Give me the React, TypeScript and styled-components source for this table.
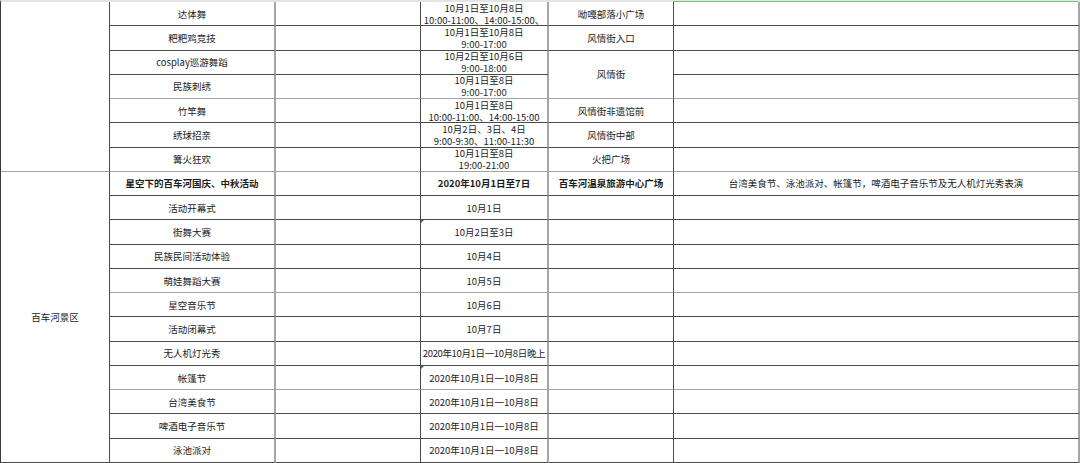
import React from "react";
import styled, { createGlobalStyle, css } from "styled-components";

const GlobalStyle = createGlobalStyle`
  html, body {
    margin: 0;
    padding: 0;
    background: #ffffff;
  }
  body {
    font-family: "Noto Sans CJK SC", "Noto Sans", "Liberation Sans", sans-serif;
    color: #1c1c1c;
  }
`;

const Sheet = styled.div`
  display: grid;
  grid-template-columns: 109px 166px 145px 128px 125px 406px;
  grid-template-rows: repeat(19, 1fr);
  width: 1080px;
  height: 463px;
  box-sizing: border-box;
  border-top: 2px solid #e4e4e4;
  border-left: 1px solid #3c3c3c;
  background: #ffffff;
`;

type CellProps = {
  $row: number;
  $col: number;
  $span: number;
  $softBottom: boolean;
  $softRight: boolean;
  $bold?: boolean;
  $mark?: boolean;
  $selected?: boolean;
  $tight?: boolean;
};

const Cell = styled.div<CellProps>`
  position: relative;
  grid-row: ${(p) => `${p.$row} / span ${p.$span}`};
  grid-column: ${(p) => p.$col};
  box-sizing: border-box;
  display: flex;
  flex-direction: column;
  align-items: center;
  justify-content: center;
  border-bottom: 1px solid ${(p) => (p.$softBottom ? "#a3a3a3" : "#4a4a4a")};
  border-right: ${(p) => (p.$softRight ? "2px solid #a6a6a6" : "1px solid #4a4a4a")};
  font-size: 9.5px;
  line-height: 12px;
  font-weight: ${(p) => (p.$bold ? 700 : 400)};
  letter-spacing: ${(p) => (p.$tight ? "-0.35px" : "0")};
  white-space: nowrap;
  text-align: center;
  min-width: 0;
  overflow: hidden;

  ${(p) =>
    p.$mark &&
    css`
      &::after {
        content: "";
        position: absolute;
        top: 0;
        left: 0;
        border-top: 3px solid #1f8f1f;
        border-right: 3px solid transparent;
      }
    `}

  ${(p) =>
    p.$selected &&
    css`
      overflow: visible;
      &::before {
        content: "";
        position: absolute;
        top: -1px;
        left: -1px;
        right: 0;
        height: 1px;
        background: #72c472;
      }
    `}
`;

const Line = styled.span`
  display: block;
  height: 12px;
`;

type CellData = {
  text?: string | string[];
  span?: number;
  bold?: boolean;
  mark?: boolean;
  selected?: boolean;
  tight?: boolean;
};

// null = covered by a merged cell above
type Row = (CellData | null)[];

const e: CellData = {};

const rows: Row[] = [
  [{ span: 7 }, { text: "达体舞" }, e, { text: ["10月1日至10月8日", "10:00-11:00、14:00-15:00、"] }, { text: "呦嘎部落小广场" }, { selected: true }],
  [null, { text: "粑粑鸡竞技" }, e, { text: ["10月1日至10月8日", "9:00-17:00"] }, { text: "风情街入口" }, e],
  [null, { text: "cosplay巡游舞蹈" }, e, { text: ["10月2日至10月6日", "9:00-18:00"] }, { text: "风情街", span: 2 }, e],
  [null, { text: "民族刺绣" }, e, { text: ["10月1日至8日", "9:00-17:00"] }, null, e],
  [null, { text: "竹竿舞" }, e, { text: ["10月1日至8日", "10:00-11:00、14:00-15:00"] }, { text: "风情街非遗馆前" }, e],
  [null, { text: "绣球招亲" }, e, { text: ["10月2日、3日、4日", "9:00-9:30、11:00-11:30"] }, { text: "风情街中部" }, e],
  [null, { text: "篝火狂欢" }, e, { text: ["10月1日至8日", "19:00-21:00"] }, { text: "火把广场" }, e],
  [
    { text: "百车河景区", span: 12 },
    { text: "星空下的百车河国庆、中秋活动", bold: true },
    e,
    { text: "2020年10月1日至7日", bold: true },
    { text: "百车河温泉旅游中心广场", bold: true },
    { text: "台湾美食节、泳池派对、帐篷节，啤酒电子音乐节及无人机灯光秀表演" },
  ],
  [null, { text: "活动开幕式" }, e, { text: "10月1日" }, e, e],
  [null, { text: "街舞大赛" }, e, { text: "10月2日至3日", mark: true }, e, e],
  [null, { text: "民族民间活动体验" }, e, { text: "10月4日" }, e, e],
  [null, { text: "萌娃舞蹈大赛" }, e, { text: "10月5日" }, e, e],
  [null, { text: "星空音乐节" }, e, { text: "10月6日" }, e, e],
  [null, { text: "活动闭幕式" }, e, { text: "10月7日" }, e, e],
  [null, { text: "无人机灯光秀" }, e, { text: "2020年10月1日一10月8日晚上", tight: true }, e, e],
  [null, { text: "帐篷节" }, e, { text: "2020年10月1日一10月8日", mark: true }, e, e],
  [null, { text: "台湾美食节" }, e, { text: "2020年10月1日一10月8日" }, e, e],
  [null, { text: "啤酒电子音乐节" }, e, { text: "2020年10月1日一10月8日" }, e, e],
  [null, { text: "泳池派对" }, e, { text: "2020年10月1日一10月8日" }, e, e],
];

// rows whose bottom rule prints lighter in the scan
const softRows = new Set([4, 7, 12, 16]);
// columns whose right rule is the grey double line
const softCols = new Set([2, 4, 6]);

export default function App() {
  return (
    <>
      <GlobalStyle />
      <Sheet>
        {rows.map((row, r) =>
          row.map((cell, c) => {
            if (!cell) return null;
            const span = cell.span ?? 1;
            const lastRow = r + span;
            const lines = Array.isArray(cell.text) ? cell.text : cell.text ? [cell.text] : [];
            return (
              <Cell
                key={`${r}-${c}`}
                $row={r + 1}
                $col={c + 1}
                $span={span}
                $softBottom={softRows.has(lastRow)}
                $softRight={softCols.has(c + 1)}
                $bold={cell.bold}
                $mark={cell.mark}
                $selected={cell.selected}
                $tight={cell.tight}
              >
                {lines.map((t, i) => (
                  <Line key={i}>{t}</Line>
                ))}
              </Cell>
            );
          })
        )}
      </Sheet>
    </>
  );
}
